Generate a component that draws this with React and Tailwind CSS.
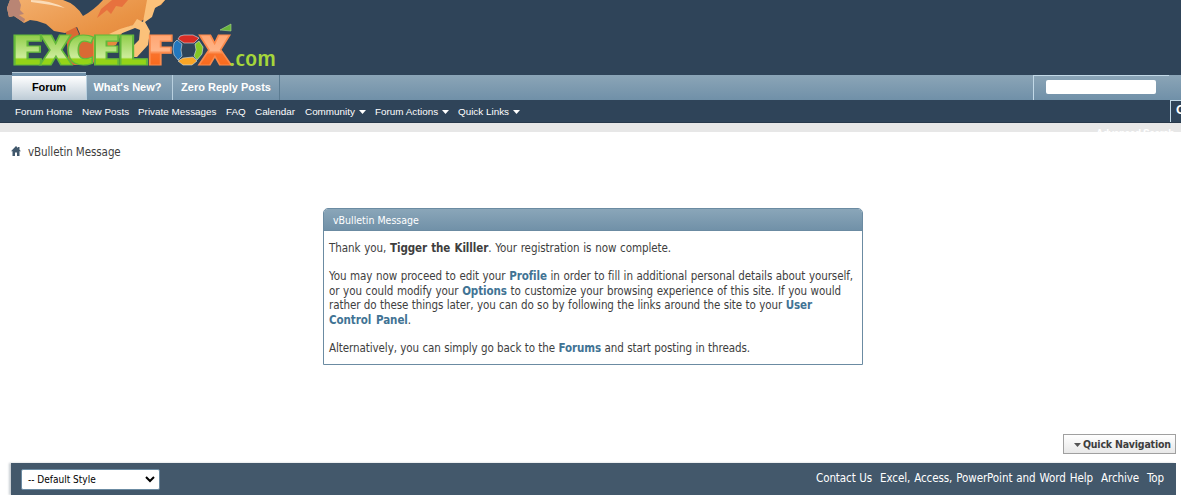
import React from 'react';

const tabs = [
	{ label: "What's New?", className: 'w-[86px] pr-1' },
	{ label: 'Zero Reply Posts', className: 'w-[107px]' }
];

const links = [
	{ label: 'Forum Home', width: 'w-[58px]' },
	{ label: 'New Posts', width: 'w-[47px]' },
	{ label: 'Private Messages', width: 'w-[79px]' },
	{ label: 'FAQ', width: 'w-5' },
	{ label: 'Calendar', width: 'w-[41px]' },
	{ label: 'Community', width: 'w-[61px]', menu: true },
	{ label: 'Forum Actions', width: 'w-[74px]', menu: true },
	{ label: 'Quick Links', width: 'w-[62px]', menu: true }
];

const footerLinks = [
	{ label: 'Contact Us', width: 56 },
	{ label: 'Excel, Access, PowerPoint and Word Help', width: 213 },
	{ label: 'Archive', width: 38 },
	{ label: 'Top', width: 19 }
];

// x, width and fill of every letter in the logo
const letters = [
	['E', 10, 34, 'green'],
	['X', 40, 32, 'green'],
	['C', 66, 29, 'green'],
	['E', 91, 30, 'green'],
	['L', 116, 32, 'green'],
	['F', 146, 28, 'orange'],
	['X', 199, 32, 'orange']
];

function Logo() {
	return (
		<svg className="block" width="290" height="72" viewBox="0 0 290 72">
			<defs>
				<linearGradient id="green" gradientUnits="userSpaceOnUse" x1="0" y1="35" x2="0" y2="66">
					<stop offset="0" stopColor="#8fcd48" />
					<stop offset="0.72" stopColor="#cdec9b" />
					<stop offset="0.78" stopColor="#94d318" />
					<stop offset="1" stopColor="#94d318" />
				</linearGradient>
				<linearGradient id="orange" gradientUnits="userSpaceOnUse" x1="0" y1="35" x2="0" y2="66">
					<stop offset="0" stopColor="#ffa673" />
					<stop offset="0.5" stopColor="#ffb487" />
					<stop offset="0.62" stopColor="#f9722b" />
					<stop offset="1" stopColor="#f9691c" />
				</linearGradient>
				<linearGradient id="fur" x1="0" y1="0" x2="1" y2="1">
					<stop offset="0" stopColor="#f3b06f" />
					<stop offset="0.5" stopColor="#e99345" />
					<stop offset="1" stopColor="#df7730" />
				</linearGradient>
			</defs>
			<path
				d="M10 0 7 8 9 17 14 16 20 20 24 23 30 20 37 21 46 24 54 31 65 33 72 30 77 27 80 34 72 46 68 58 74 65 93 64 97 54 116 45 122 33 128 27 137 24 143 20 150 17 155 7 161 5 165 0H103Q94 10 83 16 76 4 63 0Z"
				fill="url(#fur)"
			/>
			<path d="M7 8 10 0 19 0 21 5 20 10 24 14 19 15 25 19 24 22 20 20 14 16 9 17Z" fill="#b98574" />
			<path d="M31 0Q50 0 65 8Q48 4 31 2Z" fill="#fbdcb8" />
			<path d="M97 18 101 9 112 0 128 0 122 7 116 6 111 14 107 10Z" fill="#e7713e" />
			<path d="M147 0 165 0 160 5 155 8 152 17 145 22 150 31 148 45 137 57 129 57 129 50 139 40 140 30 135 28 115 36 109 34 120 29 133 25 137 19 143 22Z" fill="#fbc17a" />
			<path d="M66 32 76 27 79 34 74 42 93 41 93 61 72 65 68 58Z" fill="#da6934" />
			<g fontFamily="Open Sans, sans-serif" fontSize="42" fontWeight="800">
				{letters.map(([char, x, width, fill]) => (
					<text
						key={x}
						x={x}
						y="65"
						textLength={width}
						lengthAdjust="spacingAndGlyphs"
						fill={`url(#${fill})`}
						stroke={fill === 'green' ? '#62b83a' : '#fa8a4c'}
						strokeWidth="1.2"
					>
						{char}
					</text>
				))}
			</g>
			<g stroke="#d9e3e6" strokeWidth="0.6">
				<path d="M180 36 184 35 193 35 199 38 194 43 184 43 178 39Z" fill="#d72c24" />
				<path d="M177 40 182 44 181 50 182 56 178 60 174 55 173 49 174 43Z" fill="#2377bd" />
				<path d="M199 41 203 47 202 54 197 60 194 56 196 50 195 44Z" fill="#86c825" />
				<path d="M183 58 193 57 197 61 192 65 183 65 178 61Z" fill="#f9a526" />
			</g>
			<path d="M220 30 231 24 231 31Z" fill="#68b53b" stroke="#a9d889" strokeWidth="0.6" />
			<text
				x="229"
				y="66"
				fontFamily="Open Sans, sans-serif"
				fontSize="22"
				fontWeight="600"
				fill="#a5d63b"
				textLength="47"
				lengthAdjust="spacingAndGlyphs"
			>
				.com
			</text>
		</svg>
	);
}

function Caret({ className }) {
	return (
		<svg className={className} width="7" height="4" viewBox="0 0 7 4">
			<path d="M0 0H7L3.5 4Z" fill="currentColor" />
		</svg>
	);
}

// Keeps a run of text at a fixed width, whatever the font metrics are
function Line({ width, children }) {
	return (
		<span className="block whitespace-nowrap [text-align-last:justify]" style={{ width }}>
			{children}
		</span>
	);
}

function A({ children }) {
	return <a className="font-bold text-[#417394]">{children}</a>;
}

function Header() {
	return (
		<header className="bg-[#2f4459] font-['Liberation_Sans',sans-serif]">
			<div className="h-[72px]">
				<Logo />
			</div>
			<nav className="flex h-7 bg-[linear-gradient(#2f4459_3px,#8ba5b7_3px,#7090a8)] pl-3 text-[11px] font-bold text-white">
				<div className="flex w-[74px] items-center justify-center border-t border-[#b8cbd8] bg-[linear-gradient(#7191aa_3px,#ffffff_3px,#bdcbd6)] pt-0.5 text-black">
					Forum
				</div>
				{tabs.map((tab) => (
					<div key={tab.label} className={`mt-[3px] flex items-center justify-center border-l border-[#b9d0df] whitespace-nowrap ${tab.className}`}>
						{tab.label}
					</div>
				))}
				<div className="mt-[3px] w-px bg-[#5c7c92]" />
				<div className="mt-[3px] ml-auto flex w-[148px] shrink-0">
					<div className="w-[136px] border-t border-l border-[#c2d9e7] pt-1 pl-3">
						<div className="h-[14px] w-[110px] rounded-xs bg-white" />
					</div>
				</div>
			</nav>
			<div className="flex h-[23px] items-center gap-[9px] overflow-hidden border-b border-[#27384a] pl-[15px] text-[9.9px] text-white">
				{links.map((link) => (
					<a key={link.label} className={`flex shrink-0 items-center justify-between pt-0.5 whitespace-nowrap ${link.width}`}>
						{link.label}
						{link.menu && <Caret />}
					</a>
				))}
				<div className="ml-auto h-full w-[11px] shrink-0 overflow-hidden border-t border-l border-[#c2d9e7] pl-[5px] text-[13px] leading-[18px] font-bold">
					G
				</div>
			</div>
			<div className="h-[9px] overflow-hidden bg-[#e7e7e7] pr-[7px] text-right text-[10px] leading-[9px] font-bold tracking-[-0.4px] text-white">
				<span className="block pt-1.5">Advanced Search</span>
			</div>
		</header>
	);
}

function MessageBox() {
	return (
		<section className="mt-12 ml-[323px] h-[157px] w-[540px] rounded-t-[5px] border border-[#6b8ba2] text-[11.5px] leading-[14.5px] text-[#3e3e3e]">
			<h2 className="h-[22px] rounded-t border-b border-[#6b8ba2] bg-gradient-to-b from-[#8aa6b9] to-[#7191a8] pl-[9px] text-[10.5px] leading-[22px] text-white">
				<Line width={85}>vBulletin Message</Line>
			</h2>
			<div className="pt-2.5 pl-[5px] tracking-[-0.08px]">
				<Line width={342}>
					Thank you, <b>Tigger the Killler</b>. Your registration is now complete.
				</Line>
				<div className="py-[13.5px]">
					<Line width={524}>
						You may now proceed to edit your <A>Profile</A> in order to fill in additional personal details about yourself,
					</Line>
					<Line width={512}>
						or you could modify your <A>Options</A> to customize your browsing experience of this site. If you would
					</Line>
					<Line width={483}>
						rather do these things later, you can do so by following the links around the site to your <A>User</A>
					</Line>
					<Line width={82}>
						<A>Control Panel</A>.
					</Line>
				</div>
				<Line width={421}>
					Alternatively, you can simply go back to the <A>Forums</A> and start posting in threads.
				</Line>
			</div>
		</section>
	);
}

export default function App() {
	return (
		<div className="h-[495px] overflow-hidden bg-white font-['DejaVu_Sans_Condensed','DejaVu_Sans',sans-serif] [font-stretch:condensed]">
			<Header />
			<div className="flex h-7 items-end gap-[7px] pl-[11px] text-[11.5px] leading-4 tracking-[-0.08px] text-[#3e3e3e]">
				<svg className="mb-1" width="10" height="10" viewBox="0 0 10 10">
					<path d="M5 0 0 5.3H1.5V10H4V6.5H6V10H8.5V5.3H10L8.5 3.7V1H7V2.1Z" fill="#41586c" />
				</svg>
				<Line width={92}>vBulletin Message</Line>
			</div>
			<MessageBox />
			<div className="mt-[69px] flex justify-end pr-[5px]">
				<button className="flex h-5 w-[113px] items-center justify-between border border-[#a0a0a0] bg-gradient-to-b from-white to-[#e8e8e8] pt-px pr-1.5 pl-2.5 text-[10.5px] font-bold tracking-[-0.2px] text-[#3e3e3e]">
					<Caret className="text-[#555]" />
					<Line width={86}>Quick Navigation</Line>
				</button>
			</div>
			<footer className="mt-[9px] mr-[5px] ml-[11px] flex h-8 justify-between bg-[#43586b] pt-1.5 pr-2.5 pl-[10px] shadow-[-2px_0_2px_#c8cdd2]">
				<div className="flex h-[21px] w-[139px] items-center justify-between rounded-xs border border-[#6b8ba2] bg-white pr-1 pl-1.5 text-[10px] text-black">
					<Line width={66}>-- Default Style</Line>
					<svg width="10" height="7" viewBox="0 0 10 7">
						<path d="M1 1 5 5 9 1" fill="none" stroke="#000" strokeWidth="2" />
					</svg>
				</div>
				<div className="flex gap-2 pt-px text-[11.5px] leading-4 tracking-[-0.08px] text-white">
					{footerLinks.map((link) => (
						<Line key={link.label} width={link.width}>
							{link.label}
						</Line>
					))}
				</div>
			</footer>
		</div>
	);
}
